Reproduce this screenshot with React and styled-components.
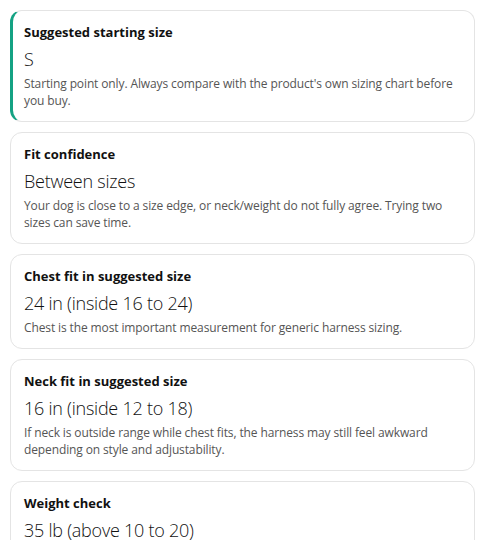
import React from 'react'
import styled, {createGlobalStyle} from 'styled-components'

const GlobalStyle = createGlobalStyle`
  html, body {
    margin: 0;
    padding: 0;
    background: #ffffff;
    overflow: hidden;
  }
  body {
    font-family: "Segoe UI", "Open Sans", "Noto Sans", sans-serif;
  }
`

const List = styled.div`
  display: flex;
  flex-direction: column;
  gap: 10px;
  padding: 10px;
`

const Card = styled.div`
  border: 1px solid #e4e4e4;
  border-left: ${props => props.highlight ? '3px solid #14a283' : '1px solid #e4e4e4'};
  border-radius: 12px;
  padding: 12px 14px 12px ${props => props.highlight ? '11px' : '13px'};
  background: #ffffff;
`

const Title = styled.div`
  font-size: 13px;
  line-height: 18px;
  font-weight: 700;
  color: #111111;
`

const Value = styled.div`
  margin-top: 6px;
  font-size: 18px;
  line-height: 24px;
  font-weight: 300;
  letter-spacing: -0.25px;
  color: #111111;
`

const Note = styled.div`
  margin-top: 4px;
  font-size: 12px;
  line-height: 17px;
  letter-spacing: -0.12px;
  color: #555555;
`

const results = [
    {
        title: 'Suggested starting size',
        value: 'S',
        note: "Starting point only. Always compare with the product's own sizing chart before you buy.",
        highlight: true
    },
    {
        title: 'Fit confidence',
        value: 'Between sizes',
        note: 'Your dog is close to a size edge, or neck/weight do not fully agree. Trying two sizes can save time.'
    },
    {
        title: 'Chest fit in suggested size',
        value: '24 in (inside 16 to 24)',
        note: 'Chest is the most important measurement for generic harness sizing.'
    },
    {
        title: 'Neck fit in suggested size',
        value: '16 in (inside 12 to 18)',
        note: 'If neck is outside range while chest fits, the harness may still feel awkward depending on style and adjustability.'
    },
    {
        title: 'Weight check',
        value: '35 lb (above 10 to 20)',
        note: 'Weight is a sanity check only. Chest and neck matter more for harness fit.'
    }
]

const App = () => {
    return (
        <>
            <GlobalStyle/>
            <List>
                {
                    results.map((item, index) => (
                        <Card key={`${item.title}${index}`} highlight={item.highlight}>
                            <Title>{item.title}</Title>
                            <Value>{item.value}</Value>
                            <Note>{item.note}</Note>
                        </Card>
                    ))
                }
            </List>
        </>
    )
}

export default App
